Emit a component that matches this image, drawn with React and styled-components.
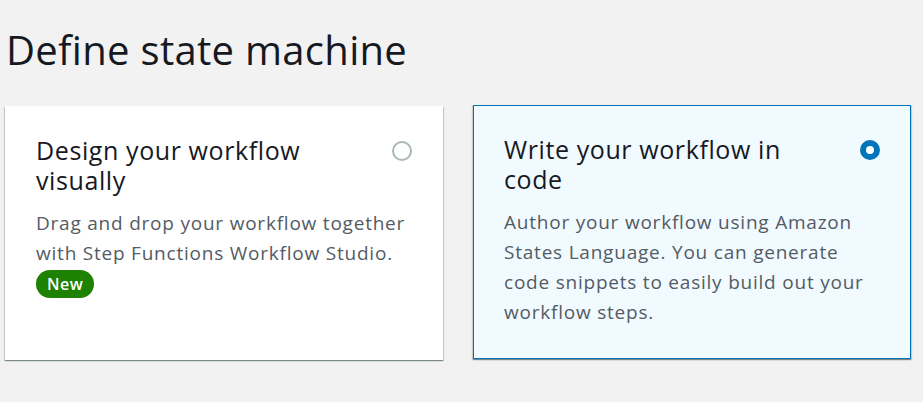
import React from "react";
import styled, { createGlobalStyle } from "styled-components";

const GlobalStyle = createGlobalStyle`
  html, body {
    margin: 0;
    padding: 0;
    background: #f2f2f2;
    font-family: "Open Sans", "Noto Sans", sans-serif;
  }
`;

const Page = styled.div`
  width: 923px;
  height: 402px;
  padding: 24px 13px 0 5px;
  box-sizing: border-box;
  overflow: hidden;
`;

const Title = styled.h1`
  margin: 0 0 30px 1px;
  font-size: 40px;
  font-weight: 400;
  line-height: 52px;
  color: #16191f;
  letter-spacing: 0.3px;
`;

const Options = styled.div`
  display: grid;
  grid-template-columns: 438px 438px;
  gap: 30px;
`;

const Card = styled.div`
  height: 254px;
  box-sizing: border-box;
  padding: 28px 30px 0 30px;
  background: ${(p) => (p.$selected ? "#f1faff" : "#ffffff")};
  border: 1px solid ${(p) => (p.$selected ? "#0073bb" : "transparent")};
  box-shadow: 0 1px 1px 0 rgba(0, 28, 36, 0.3), 1px 1px 1px 0 rgba(0, 28, 36, 0.15),
    -1px 1px 1px 0 rgba(0, 28, 36, 0.15);
  margin-top: ${(p) => (p.$selected ? "-1px" : "0")};
`;

const CardHead = styled.div`
  display: flex;
  justify-content: space-between;
  align-items: flex-start;
`;

const CardTitle = styled.div`
  width: 320px;
  font-size: 25px;
  line-height: 30px;
  letter-spacing: 0.6px;
  color: #16191f;
`;

const Radio = styled.span`
  width: 20px;
  height: 20px;
  box-sizing: border-box;
  border-radius: 50%;
  margin-top: 6px;
  background: #ffffff;
  border: ${(p) => (p.$checked ? "6px solid #0073bb" : "2px solid #aab7b8")};
`;

const Desc = styled.p`
  margin: 13px 0 0 0;
  font-size: 19px;
  line-height: 30px;
  letter-spacing: 0.78px;
  color: #545b64;
`;

const Badge = styled.span`
  display: inline-block;
  padding: 0 11px;
  height: 28px;
  line-height: 28px;
  border-radius: 14px;
  background: #1d8102;
  color: #ffffff;
  font-size: 16px;
  font-weight: 600;
  letter-spacing: 0.5px;
`;

export default function App() {
  return (
    <Page>
      <GlobalStyle />
      <Title>Define state machine</Title>
      <Options>
        <Card>
          <CardHead>
            <CardTitle>Design your workflow visually</CardTitle>
            <Radio />
          </CardHead>
          <Desc>
            Drag and drop your workflow together with Step Functions Workflow Studio.
            <br />
            <Badge>New</Badge>
          </Desc>
        </Card>
        <Card $selected>
          <CardHead>
            <CardTitle>Write your workflow in code</CardTitle>
            <Radio $checked />
          </CardHead>
          <Desc>
            Author your workflow using Amazon States Language. You can generate code
            snippets to easily build out your workflow steps.
          </Desc>
        </Card>
      </Options>
    </Page>
  );
}
